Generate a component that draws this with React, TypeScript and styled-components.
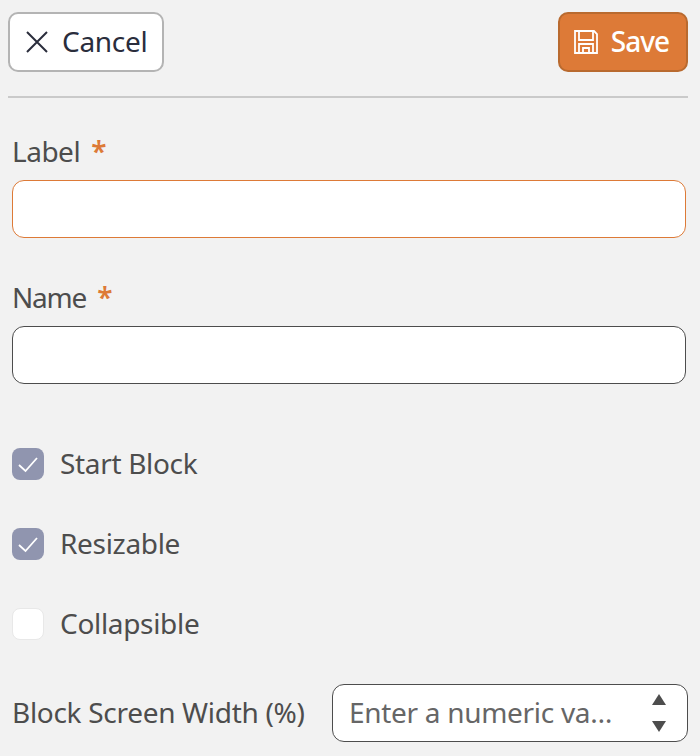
import React from "react";
import styled, { createGlobalStyle } from "styled-components";

const Global = createGlobalStyle`
  html, body { margin: 0; padding: 0; background: #f2f2f2; }
  body { font-family: "Noto Sans", "Open Sans", sans-serif; overflow: hidden; }
`;

const Page = styled.div`
  width: 700px;
  height: 756px;
  box-sizing: border-box;
  padding: 12px 12px 0 8px;
  background: #f2f2f2;
  overflow: hidden;
`;

const Toolbar = styled.div`
  display: flex;
  justify-content: space-between;
  padding-bottom: 24px;
  border-bottom: 2px solid #cacaca;
`;

const ToolButton = styled.button<{ $primary?: boolean }>`
  display: flex;
  align-items: center;
  gap: ${(p) => (p.$primary ? "13px" : "12px")};
  height: 60px;
  box-sizing: border-box;
  padding: ${(p) => (p.$primary ? "0 17px 0 14px" : "0 15px 0 14px")};
  border-radius: 10px;
  border: 2px solid ${(p) => (p.$primary ? "#b96a2f" : "#b4b4b4")};
  background: ${(p) => (p.$primary ? "#dd7a37" : "#ffffff")};
  color: ${(p) => (p.$primary ? "#ffffff" : "#2a2d3c")};
  font-family: inherit;
  font-size: 28px;
  font-weight: ${(p) => (p.$primary ? 500 : 400)};
  letter-spacing: ${(p) => (p.$primary ? "-1px" : "-0.3px")};
`;

const ButtonText = styled.span`
  padding-bottom: 2px;
`;

const Form = styled.div`
  padding: 0 2px 0 4px;
`;

const Field = styled.div<{ $top: number }>`
  margin-top: ${(p) => p.$top}px;
  display: flex;
  flex-direction: column;
`;

const FieldLabel = styled.label<{ $spacing: number }>`
  height: 38px;
  margin-bottom: 10px;
  line-height: 38px;
  font-size: 28px;
  letter-spacing: ${(p) => p.$spacing}px;
  color: #4d4d4d;
`;

const Star = styled.span`
  margin-left: 11px;
  font-weight: 600;
  letter-spacing: 0;
  color: #dd7a37;
`;

const TextInput = styled.div<{ $focused?: boolean }>`
  height: 58px;
  box-sizing: border-box;
  background: #fff;
  border-radius: 12px;
  border: 1.5px solid ${(p) => (p.$focused ? "#dd7a37" : "#4d4d4d")};
`;

const Checks = styled.div`
  margin-top: 64px;
  display: flex;
  flex-direction: column;
  gap: 48px;
`;

const CheckRow = styled.div`
  display: flex;
  align-items: center;
  gap: 16px;
  height: 32px;
  font-size: 28px;
  letter-spacing: -0.32px;
  color: #4d4d4d;
`;

const CheckText = styled.span`
  padding-bottom: 2px;
`;

const Box = styled.span<{ $on?: boolean }>`
  width: 32px;
  height: 32px;
  box-sizing: border-box;
  border-radius: 8px;
  display: flex;
  align-items: center;
  justify-content: center;
  background: ${(p) => (p.$on ? "#9095af" : "#ffffff")};
  border: ${(p) => (p.$on ? "none" : "1.5px solid #e8e8e8")};
`;

const WidthRow = styled.div`
  margin-top: 44px;
  display: flex;
  align-items: center;
  justify-content: space-between;
  margin-right: -2px;
`;

const WidthLabel = styled.span`
  padding-bottom: 2px;
  font-size: 28px;
  letter-spacing: -0.3px;
  color: #4d4d4d;
`;

const NumberBox = styled.div`
  width: 356px;
  height: 58px;
  box-sizing: border-box;
  display: flex;
  align-items: center;
  justify-content: space-between;
  padding: 0 21px 0 16px;
  background: #fff;
  border: 1.5px solid #4d4d4d;
  border-radius: 12px;
  font-size: 28px;
  letter-spacing: -0.3px;
  color: #666666;
`;

const Placeholder = styled.span`
  padding-bottom: 2px;
`;

const Spinner = styled.span`
  display: flex;
  flex-direction: column;
  gap: 16px;
`;

const Check = () => (
  <svg width="24" height="24" viewBox="0 0 24 24" fill="none" stroke="#fff" strokeWidth="1.8">
    <path d="M3 13 L9.5 19 L21 6" />
  </svg>
);

export default function App() {
  return (
    <Page>
      <Global />
      <Toolbar>
        <ToolButton>
          <svg width="26" height="26" viewBox="0 0 26 26" fill="none" stroke="#2a2d3c" strokeWidth="2">
            <path d="M3 3 L23 23 M23 3 L3 23" />
          </svg>
          <ButtonText>Cancel</ButtonText>
        </ToolButton>
        <ToolButton $primary>
          <svg width="24" height="24" viewBox="0 0 24 24" fill="none" stroke="#fff" strokeWidth="1.8">
            <path d="M1 1 H20 L23 4 V23 H1 Z" />
            <path d="M5 1 V10 H19 V1" />
            <path d="M5 23 V14 H19 V23" />
            <path d="M9 23 V18 H15 V23" />
          </svg>
          <ButtonText>Save</ButtonText>
        </ToolButton>
      </Toolbar>
      <Form>
        <Field $top={34}>
          <FieldLabel $spacing={-0.5}>Label<Star>*</Star></FieldLabel>
          <TextInput $focused />
        </Field>
        <Field $top={40}>
          <FieldLabel $spacing={-1.2}>Name<Star>*</Star></FieldLabel>
          <TextInput />
        </Field>
        <Checks>
          <CheckRow><Box $on><Check /></Box><CheckText>Start Block</CheckText></CheckRow>
          <CheckRow><Box $on><Check /></Box><CheckText>Resizable</CheckText></CheckRow>
          <CheckRow><Box /><CheckText>Collapsible</CheckText></CheckRow>
        </Checks>
        <WidthRow>
          <WidthLabel>Block Screen Width (%)</WidthLabel>
          <NumberBox>
            <Placeholder>Enter a numeric va…</Placeholder>
            <Spinner>
              <svg width="14" height="11" viewBox="0 0 14 11" fill="#4d4d4d"><path d="M7 0 L14 11 H0 Z" /></svg>
              <svg width="14" height="11" viewBox="0 0 14 11" fill="#4d4d4d"><path d="M0 0 H14 L7 11 Z" /></svg>
            </Spinner>
          </NumberBox>
        </WidthRow>
      </Form>
    </Page>
  );
}
